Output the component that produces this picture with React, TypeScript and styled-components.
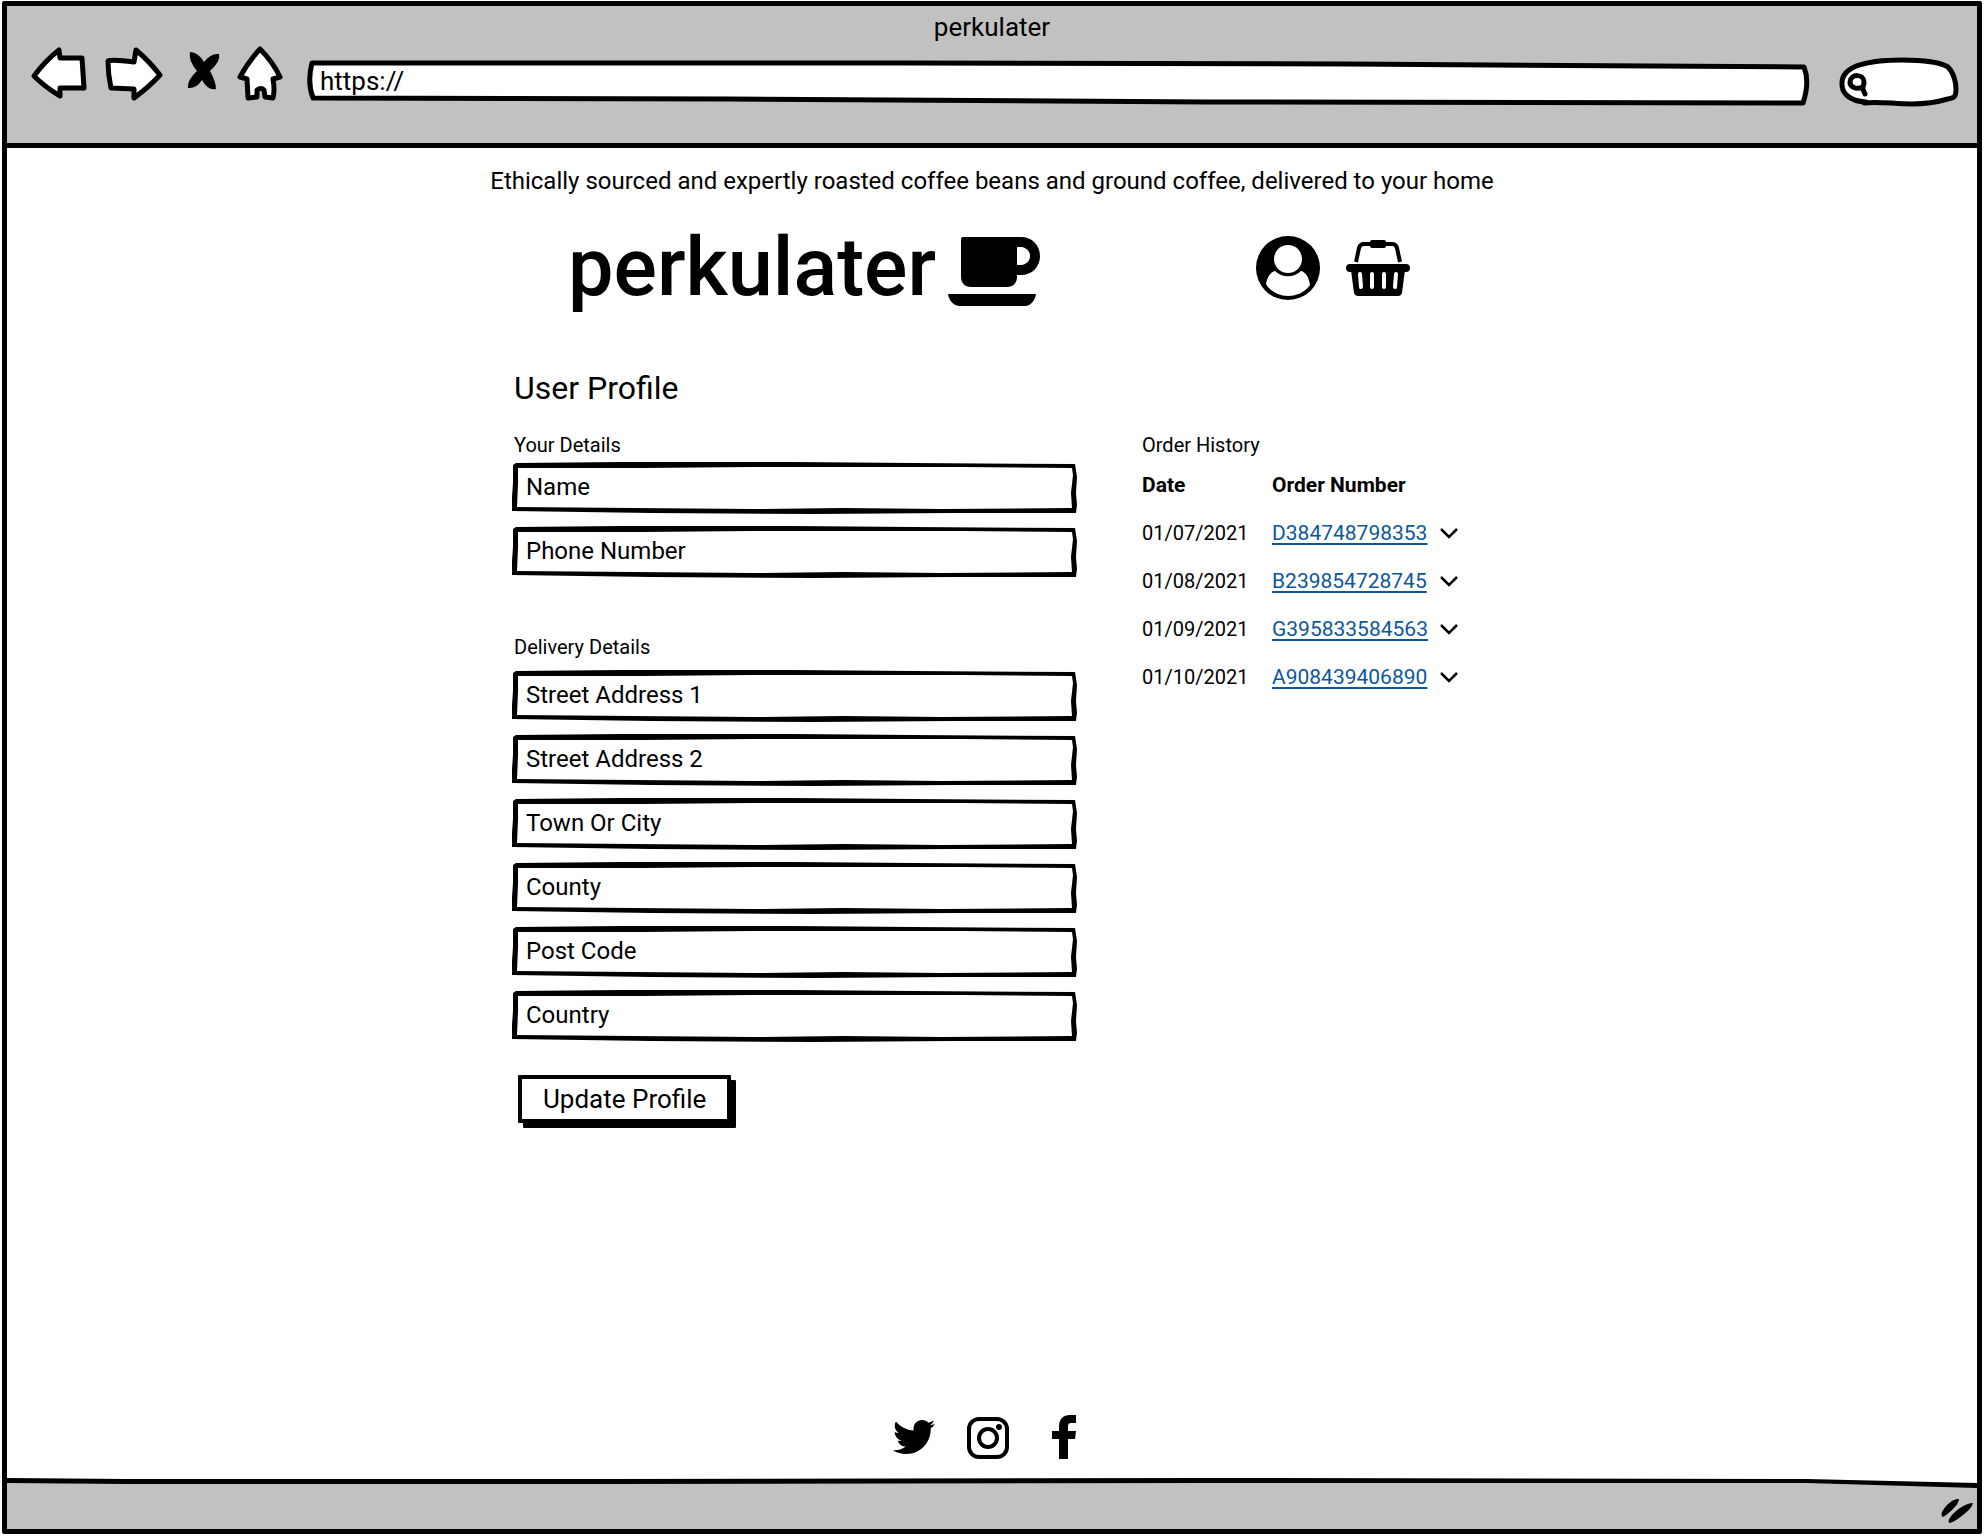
import React from 'react';
import styled, { createGlobalStyle } from 'styled-components';
import { FaTwitter } from 'react-icons/fa';

const INK = '#000000';
const CHROME = '#c1c1c1';
const LINK = '#0b579c';

const GlobalStyle = createGlobalStyle`
  *, *::before, *::after { box-sizing: border-box; }
  body {
    margin: 0;
    background: #ffffff;
    color: ${INK};
    font-family: Roboto, "Liberation Sans", sans-serif;
    font-size: 20px;
    line-height: 24px;
    font-weight: 400;
  }
  button, input { font: inherit; color: inherit; }
  svg { display: block; overflow: visible; }
`;

const Page = styled.div`
  display: flex;
  min-height: 100vh;
  padding: 1px 2px 2px;
`;

const Frame = styled.div`
  flex: 1;
  display: flex;
  flex-direction: column;
  border: 5px solid ${INK};
  border-radius: 2px;
`;

const BrowserBar = styled.header`
  background: ${CHROME};
  border-bottom: 5px solid ${INK};
  padding-bottom: 23px;
`;

const WindowTitle = styled.div`
  padding-top: 2px;
  font-size: 26px;
  line-height: 38px;
  text-align: center;
`;

const Toolbar = styled.div`
  display: flex;
  align-items: center;
  gap: 24px;
  padding: 0 17px 0 23px;
`;

const NavButtons = styled.nav`
  display: flex;
  gap: 14px;
  padding-bottom: 18px;
`;

const IconButton = styled.button`
  padding: 0;
  border: 0;
  background: none;
  cursor: pointer;
`;

/* A hand-drawn outline and the control it surrounds share one grid cell. */
const Sketched = styled.div`
  display: grid;
  > * { grid-area: 1 / 1; }
`;

const Outline = styled.svg`
  width: 100%;
  height: 100%;
  min-width: 0;
`;

const AddressBar = styled(Sketched)`
  flex: 1;
  height: 44px;
`;

const SearchBar = styled(Sketched)`
  width: 124px;
  height: 50px;
`;

const TextInput = styled.input`
  position: relative;
  width: 100%;
  min-width: 0;
  height: 100%;
  padding: 0 14px 2px;
  border: 0;
  background: transparent;
  font-size: 24px;
  line-height: 32px;
  &::placeholder { color: ${INK}; opacity: 1; }
  &:focus { outline: none; }
`;

const AddressInput = styled(TextInput)`
  padding: 0 12px 4px;
  font-size: 26px;
`;

const SearchInput = styled(TextInput)`
  padding-left: 36px;
`;

const Main = styled.main`
  flex: 1;
  display: flex;
  flex-direction: column;
  align-items: center;
  padding: 17px 24px 20px;
`;

const Tagline = styled.p`
  margin: 0;
  font-size: 24px;
  line-height: 32px;
  text-align: center;
`;

const Masthead = styled.div`
  display: flex;
  align-items: center;
  justify-content: space-between;
  width: 100%;
  max-width: 960px;
  margin-top: 31px;
  padding: 0 62px 0 56px;
`;

const Logo = styled.a`
  display: flex;
  align-items: center;
  gap: 12px;
  color: inherit;
  text-decoration: none;
  font-size: 81px;
  line-height: 80px;
  font-weight: 500;
`;

const Actions = styled.div`
  display: flex;
  align-items: center;
  gap: 26px;
`;

const Profile = styled.div`
  width: 100%;
  max-width: 960px;
  margin-top: 60px;
`;

const Heading = styled.h1`
  margin: 0 0 25px;
  padding-left: 2px;
  font-size: 32px;
  line-height: 40px;
  font-weight: 400;
`;

const Columns = styled.div`
  display: grid;
  grid-template-columns: minmax(0, 565px) minmax(0, 330px);
  justify-content: space-between;
  align-items: start;
`;

const Form = styled.form`
  display: flex;
  flex-direction: column;
  gap: 58px;
`;

const Group = styled.section<{ $space: number }>`
  display: flex;
  flex-direction: column;
  gap: 14px;
  > h2 {
    margin-bottom: ${(p) => p.$space - 14}px;
    padding-left: 2px;
  }
`;

const SectionTitle = styled.h2`
  margin: 0;
  font-size: 20px;
  line-height: 24px;
  font-weight: 400;
`;

const FieldBox = styled(Sketched)`
  height: 50px;
`;

const UpdateButton = styled.button`
  align-self: flex-start;
  margin: -24px 0 0 6px;
  padding: 4px 21px;
  border: 4px solid ${INK};
  border-radius: 1px;
  background: #ffffff;
  box-shadow: 5px 5px 0 ${INK};
  font-size: 26px;
  line-height: 32px;
  cursor: pointer;
`;

const Orders = styled.table`
  margin-top: 4px;
  border-collapse: collapse;
  text-align: left;
  th, td { height: 48px; padding: 0; }
  th { font-size: 21px; font-weight: 700; }
`;

const DateCol = styled.col`
  width: 130px;
`;

const NumberCol = styled.col`
  width: 168px;
`;

const OrderLink = styled.a`
  color: ${LINK};
  font-size: 21px;
  text-decoration: underline;
  text-decoration-thickness: 2px;
  text-underline-offset: 3px;
  text-decoration-skip-ink: none;
`;

const Social = styled.nav`
  display: flex;
  align-items: center;
  gap: 31px;
  margin-top: auto;
  padding-right: 6px;
  a { color: inherit; }
`;

const StatusBar = styled.footer`
  display: grid;
  height: 50px;
  > * { grid-area: 1 / 1; }
`;

const Grip = styled.div`
  justify-self: end;
  align-self: end;
  padding: 0 4px 4px 0;
`;

const strokeProps = {
  fill: '#fff',
  stroke: INK,
  strokeWidth: 5,
  strokeLinejoin: 'round' as const,
  strokeLinecap: 'round' as const,
};

function Field({ name }: { name: string }) {
  return (
    <FieldBox>
      <Outline viewBox="0 0 564 50" preserveAspectRatio="none" aria-hidden="true">
        <path
          fillRule="evenodd"
          d="M1 2 L4 0 L110 -1 L280 -1 L400 0 L562 1 L564 14 L563 30 L564 42 L563 50 L440 50 L300 51 L140 50 L0 48 L0 34 L1 20Z M6 5 L6 20 L5 44 L120 45 L240 46 L330 45 L430 46 L559 45 L558 30 L560 12 L559 5 L450 4 L370 4 L240 4 L130 5Z"
        />
      </Outline>
      <TextInput type="text" placeholder={name} aria-label={name} />
    </FieldBox>
  );
}

const orders = [
  { date: '01/07/2021', number: 'D384748798353' },
  { date: '01/08/2021', number: 'B239854728745' },
  { date: '01/09/2021', number: 'G395833584563' },
  { date: '01/10/2021', number: 'A908439406890' },
];

const contactFields = ['Name', 'Phone Number'];
const deliveryFields = [
  'Street Address 1',
  'Street Address 2',
  'Town Or City',
  'County',
  'Post Code',
  'Country',
];

function BrowserChrome() {
  return (
    <BrowserBar>
      <WindowTitle>perkulater</WindowTitle>
      <Toolbar>
        <NavButtons aria-label="Browser">
          <IconButton aria-label="Back">
            <svg width="60" height="56" viewBox="30 46 60 56">
              <path {...strokeProps} d="M34 76 Q45 61 59 50 L60 58 L82 58 Q83 74 84 88 L60 88 L60 96 Q45 87 34 76Z" />
            </svg>
          </IconButton>
          <IconButton aria-label="Forward">
            <svg width="60" height="56" viewBox="104 46 60 56">
              <path {...strokeProps} d="M108 61 Q112 59 134 62 L136 50 Q149 61 160 75 Q149 87 134 98 L134 89 L111 88 Q108 75 108 61Z" />
            </svg>
          </IconButton>
          <IconButton aria-label="Stop">
            <svg width="44" height="56" viewBox="178 46 44 56">
              <path d="M190 52 Q198 52 204 62 Q211 53 219 54 Q221 61 210 71 Q216 82 216 89 Q208 91 202 80 Q196 89 188 88 Q187 80 197 71 Q188 60 190 52Z" />
            </svg>
          </IconButton>
          <IconButton aria-label="Home">
            <svg width="48" height="56" viewBox="236 46 48 56">
              <path {...strokeProps} d="M260 49 Q273 62 280 77 L273 79 Q275 90 273 98 L265 97 L264 90 Q261 87 257 90 L257 97 L248 98 L247 79 L240 77 Q248 62 260 49Z" />
            </svg>
          </IconButton>
        </NavButtons>
        <AddressBar>
          <Outline viewBox="0 0 1504 44" preserveAspectRatio="none" aria-hidden="true">
            <path {...strokeProps} vectorEffect="non-scaling-stroke" d="M4 2 L600 2 L1040 3 L1496 6 Q1502 21 1495 42 L900 41 L420 38 L5 37 Q-1 21 4 2Z" />
          </Outline>
          <AddressInput type="text" defaultValue="https://" aria-label="Address" />
        </AddressBar>
        <SearchBar>
          <Outline viewBox="1836 58 124 50" aria-hidden="true">
            <path {...strokeProps} d="M1866 102 C1849 101 1841 93 1842 82 C1843 66 1868 60 1902 60 C1926 60 1941 63 1948 67 C1954 73 1956 83 1956 89 C1956 97 1954 98 1948 99 C1934 103 1924 104 1912 104 C1894 104 1878 101 1864 103" />
            <path {...strokeProps} d="M1863 87 C1856 90 1850 87 1850 82 C1851 73 1864 74 1864 82 Q1864 86 1862 87 L1865 94" />
          </Outline>
          <SearchInput type="text" aria-label="Search" />
        </SearchBar>
      </Toolbar>
    </BrowserBar>
  );
}

function CupIcon() {
  return (
    <svg width="92" height="80" viewBox="948 228 92 80" aria-hidden="true">
      <path
        fillRule="evenodd"
        d="M963 237 H1021 C1032 237 1040 245 1040 256 C1040 267 1032 275 1021 275 H1017 V277 C1017 283 1013 287 1007 287 H971 C965 287 961 283 961 277 V239 Q961 237 963 237Z M1017 247 V265 H1021 C1033 264 1033 248 1021 247Z"
      />
      <path d="M948 294 H1036 C1035 300 1031 306 1025 306 H960 C953 306 949 300 948 294Z" />
    </svg>
  );
}

function UserIcon() {
  return (
    <svg width="64" height="64" viewBox="0 0 64 64" aria-hidden="true">
      <circle cx="32" cy="32" r="32" />
      <circle cx="32" cy="23" r="14" fill="#fff" />
      <path fill="#fff" d="M10 48 C11 42 14 36 19 35 C26 42 38 42 45 35 C50 36 53 42 54 49 C49 56 41 60 32 60 C22 60 14 55 10 48Z" />
    </svg>
  );
}

function BasketIcon() {
  return (
    <svg width="64" height="56" viewBox="0 0 64 56" aria-hidden="true">
      <path d="M10 22 L13 8 Q14 4 18 4 H46 Q50 4 51 8 L54 22" fill="none" stroke={INK} strokeWidth="4" />
      <rect x="24" y="0" width="16" height="8" rx="2" />
      <rect x="0" y="24" width="64" height="8" rx="4" />
      <path d="M5 30 H59 L56 53 Q55 56 52 56 H12 Q9 56 8 53Z" />
      <path d="M14 34 L15 47 M26 34 V47 M38 34 V47 M50 34 L49 47" stroke="#fff" strokeWidth="4" strokeLinecap="round" />
    </svg>
  );
}

export default function App() {
  return (
    <>
      <GlobalStyle />
      <Page>
        <Frame>
          <BrowserChrome />
          <Main>
            <Tagline>
              Ethically sourced and expertly roasted coffee beans and ground coffee, delivered to your home
            </Tagline>
            <Masthead>
              <Logo href="#home">
                perkulater
                <CupIcon />
              </Logo>
              <Actions>
                <IconButton aria-label="Account">
                  <UserIcon />
                </IconButton>
                <IconButton aria-label="Basket">
                  <BasketIcon />
                </IconButton>
              </Actions>
            </Masthead>
            <Profile>
              <Heading>User Profile</Heading>
              <Columns>
                <Form onSubmit={(e) => e.preventDefault()}>
                  <Group $space={6}>
                    <SectionTitle>Your Details</SectionTitle>
                    {contactFields.map((f) => (
                      <Field key={f} name={f} />
                    ))}
                  </Group>
                  <Group $space={12}>
                    <SectionTitle>Delivery Details</SectionTitle>
                    {deliveryFields.map((f) => (
                      <Field key={f} name={f} />
                    ))}
                  </Group>
                  <UpdateButton type="submit">Update Profile</UpdateButton>
                </Form>
                <section>
                  <SectionTitle>Order History</SectionTitle>
                  <Orders>
                    <colgroup>
                      <DateCol />
                      <NumberCol />
                      <col />
                    </colgroup>
                    <thead>
                      <tr>
                        <th scope="col">Date</th>
                        <th scope="col">Order Number</th>
                        <td />
                      </tr>
                    </thead>
                    <tbody>
                      {orders.map((o) => (
                        <tr key={o.number}>
                          <td>{o.date}</td>
                          <td>
                            <OrderLink href={`#${o.number}`}>{o.number}</OrderLink>
                          </td>
                          <td>
                            <IconButton aria-label={`Show order ${o.number}`}>
                              <svg width="18" height="14" viewBox="0 0 18 14" aria-hidden="true">
                                <path d="M1 3 L9 11 L17 3" fill="none" stroke={INK} strokeWidth="2.5" />
                              </svg>
                            </IconButton>
                          </td>
                        </tr>
                      ))}
                    </tbody>
                  </Orders>
                </section>
              </Columns>
            </Profile>
            <Social aria-label="Social media">
              <a href="#twitter" aria-label="Twitter">
                <FaTwitter size={42} />
              </a>
              <a href="#instagram" aria-label="Instagram">
                <svg width="44" height="44" viewBox="0 0 44 44" fill="none" stroke={INK} strokeWidth="4">
                  <rect x="3" y="4" width="38" height="38" rx="10" />
                  <circle cx="22" cy="23" r="9" />
                  <circle cx="33" cy="12" r="3" fill={INK} stroke="none" />
                </svg>
              </a>
              <a href="#facebook" aria-label="Facebook">
                <svg width="44" height="44" viewBox="0 0 44 44">
                  <path d="M18 44 V24 H11 V16 H18 V12 C18 4 22 0 29 0 H35 V8 H30 C28 8 27 9 27 11 V16 H35 L34 24 H27 V44Z" />
                </svg>
              </a>
            </Social>
          </Main>
          <StatusBar>
            <Outline viewBox="0 0 1970 50" preserveAspectRatio="none" aria-hidden="true">
              <path fill={CHROME} d="M0 2 L1800 2 L1970 6 V50 H0Z" />
              <path d="M0 -1 L120 0 L600 0 L1200 -1 L1800 0 L1970 4 V9 L1800 4 L1200 4 L600 5 L120 5 L0 4Z" />
            </Outline>
            <Grip>
              <svg width="32" height="28" viewBox="1941 1497 32 28" aria-hidden="true">
                <path d="M1942 1517 Q1940 1512 1947 1505 Q1954 1498 1959 1499 Q1959 1503 1953 1509 Q1946 1516 1942 1517Z M1949 1523 Q1947 1519 1956 1511 Q1966 1503 1973 1503 Q1972 1508 1963 1515 Q1953 1523 1949 1523Z" />
              </svg>
            </Grip>
          </StatusBar>
        </Frame>
      </Page>
    </>
  );
}
